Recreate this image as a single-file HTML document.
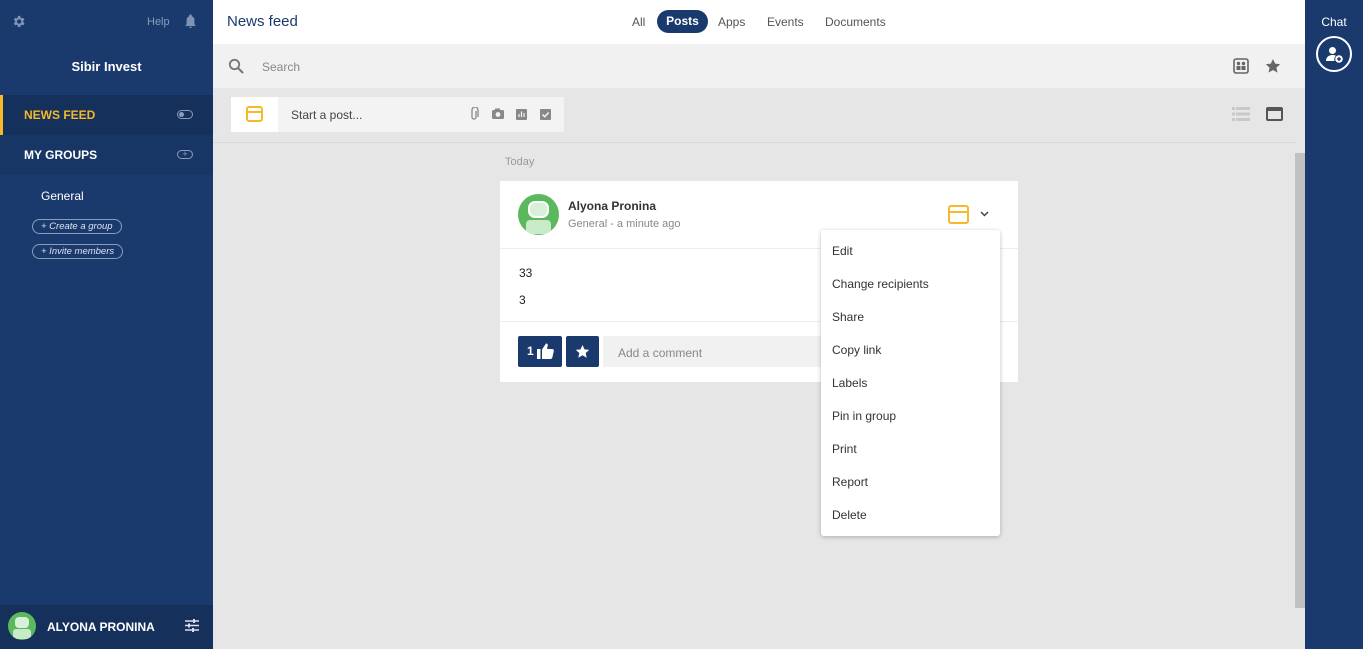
<!DOCTYPE html>
<html><head><meta charset="utf-8"><style>
*{box-sizing:border-box;margin:0;padding:0}
body{width:1363px;height:649px;overflow:hidden;font-family:"Liberation Sans",sans-serif;font-size:12px;position:relative;background:#e6e6e6}
.abs{position:absolute}
#sb{left:0;top:0;width:213px;height:649px;background:#1a3a6d;color:#fff}
#chat{left:1305px;top:0;width:58px;height:649px;background:#1a3a6d;color:#fff}
.menu div{height:33px;line-height:33px;padding-left:11px;color:#333;font-size:12px}
.pill{border:1px solid #8a9cba;border-radius:10px;font-style:italic;font-size:10px;color:#dbe2ee;padding:1px 8px;display:inline-block}
</style></head><body>
<div id="sb" class="abs">
  <svg class="abs" style="left:11px;top:14px" width="15" height="15" viewBox="0 0 24 24"><path fill="#7f93b4" d="M19.4 13a7.5 7.5 0 000-2l2.1-1.6-2-3.5-2.5 1a7 7 0 00-1.7-1L15 3h-4l-.4 2.9a7 7 0 00-1.7 1l-2.5-1-2 3.5L6.6 11a7.5 7.5 0 000 2l-2.1 1.6 2 3.5 2.5-1a7 7 0 001.7 1L11 21h4l.4-2.9a7 7 0 001.7-1l2.5 1 2-3.5zM13 15.5A3.5 3.5 0 1113 8.5a3.5 3.5 0 010 7z"/></svg>
  <div class="abs" style="left:147px;top:16px;color:#8a9cba;font-size:11px">Help</div>
  <svg class="abs" style="left:184px;top:14px" width="13" height="15" viewBox="0 0 20 22"><path fill="#7f93b4" d="M10 0a2 2 0 012 2v1a6 6 0 014 6v6l2 3H2l2-3V9a6 6 0 014-6V2a2 2 0 012-2zM8 19h4a2 2 0 01-4 0z"/></svg>
  <div class="abs" style="left:0;width:213px;top:59px;text-align:center;font-weight:bold;font-size:13px">Sibir Invest</div>
  <div class="abs" style="left:0;top:95px;width:213px;height:40px;background:#14305b;border-left:3px solid #f7b928"></div>
  <div class="abs" style="left:24px;top:108px;font-weight:bold;color:#f7b928;font-size:12px">NEWS FEED</div>
  <div class="abs" style="left:177px;top:110px;width:16px;height:9px;border:1px solid #8a9cba;border-radius:5px"><div style="width:5px;height:5px;background:#8a9cba;border-radius:50%;margin:1px"></div></div>
  <div class="abs" style="left:0;top:135px;width:213px;height:40px;background:#173665"></div>
  <div class="abs" style="left:24px;top:148px;font-weight:bold;font-size:12px">MY GROUPS</div>
  <div class="abs" style="left:177px;top:150px;width:16px;height:9px;border:1px solid #8a9cba;border-radius:5px;color:#8a9cba;font-size:9px;line-height:7px;text-align:center">+</div>
  <div class="abs" style="left:41px;top:189px;font-size:12px">General</div>
  <div class="abs pill" style="left:32px;top:219px;font-size:9.5px">+ Create a group</div>
  <div class="abs pill" style="left:32px;top:244px;font-size:9.5px">+ Invite members</div>
  <div class="abs" style="left:0;top:605px;width:213px;height:44px;background:#14305b"></div>
  <div class="abs" style="left:8px;top:612px;width:28px;height:28px;border-radius:50%;background:#5cb85c;overflow:hidden"><div style="margin:5px 7px 0;width:14px;height:11px;border-radius:4px;background:#d8f0d8"></div><div style="margin:1px 5px;width:18px;height:10px;border-radius:3px;background:#c9eac9"></div></div>
  <div class="abs" style="left:47px;top:620px;font-weight:bold;font-size:12px">ALYONA PRONINA</div>
  <svg class="abs" style="left:185px;top:619px" width="14" height="13" viewBox="0 0 14 13"><g stroke="#dde" stroke-width="1.6"><path d="M0 2h14M0 6.5h14M0 11h14"/></g><g stroke="#dde" stroke-width="2"><path d="M9 0v4M4 4.5v4M8 9v4"/></g></svg>
</div>
<div class="abs" style="left:213px;top:0;width:1092px;height:44px;background:#fff"></div>
<div class="abs" style="left:227px;top:13px;font-size:15px;color:#1a3a6d">News feed</div>
<div class="abs" style="left:632px;top:15px;color:#555;font-size:12px">All</div>
<div class="abs" style="left:657px;top:10px;width:51px;height:23px;border-radius:12px;background:#1a3a6d;color:#fff;font-weight:bold;text-align:center;line-height:23px">Posts</div>
<div class="abs" style="left:718px;top:15px;color:#555">Apps</div>
<div class="abs" style="left:767px;top:15px;color:#555">Events</div>
<div class="abs" style="left:825px;top:15px;color:#555">Documents</div>
<div class="abs" style="left:213px;top:44px;width:1092px;height:44px;background:#f1f1f1"></div>
<svg class="abs" style="left:228px;top:58px" width="16" height="16" viewBox="0 0 16 16"><circle cx="6.5" cy="6.5" r="4.7" fill="none" stroke="#777" stroke-width="1.8"/><path d="M10 10l5 5" stroke="#777" stroke-width="2"/></svg>
<div class="abs" style="left:262px;top:60px;color:#888">Search</div>
<svg class="abs" style="left:1233px;top:58px" width="16" height="16" viewBox="0 0 16 16"><rect x="1" y="1" width="14" height="14" rx="2" fill="none" stroke="#666" stroke-width="1.6"/><circle cx="5.5" cy="5.5" r="1.7" fill="#666"/><circle cx="10.5" cy="5.5" r="1.7" fill="#666"/><rect x="3.5" y="8" width="4" height="4" fill="#666"/><rect x="8.5" y="8" width="4" height="4" fill="#666"/></svg>
<svg class="abs" style="left:1265px;top:58px" width="16" height="16" viewBox="0 0 24 24"><path fill="#666" d="M12 1.5l3.2 7 7.6.8-5.7 5.1 1.6 7.5L12 18l-6.7 3.9 1.6-7.5-5.7-5.1 7.6-.8z"/></svg>
<div class="abs" style="left:231px;top:97px;width:333px;height:35px;background:#f3f3f3"></div>
<div class="abs" style="left:231px;top:97px;width:47px;height:35px;background:#fff"></div>
<div class="abs" style="left:246px;top:106px;width:17px;height:16px;border:2px solid #f7b928;border-radius:3px"><div style="height:2px;background:#f7b928;margin-top:3px"></div></div>
<div class="abs" style="left:291px;top:108px;color:#444">Start a post...</div>
<svg class="abs" style="left:469px;top:107px" width="84" height="14" viewBox="0 0 84 14">
<path d="M7 4v6a2 2 0 01-4 0V3a3 3 0 016 0v7" fill="none" stroke="#888" stroke-width="1.3"/>
<rect x="23" y="3" width="12" height="9" rx="1.5" fill="#888"/><rect x="26" y="1.5" width="5" height="2" fill="#888"/><circle cx="29" cy="7.5" r="2.4" fill="#f3f3f3"/>
<rect x="47" y="2" width="11" height="11" rx="1" fill="#888"/><path d="M50 10V7M52.5 10V4.5M55 10V6" stroke="#f3f3f3" stroke-width="1.2"/>
<rect x="71" y="2" width="11" height="11" rx="1" fill="#888"/><path d="M73.5 7.5l2.2 2.2 4-4.2" fill="none" stroke="#f3f3f3" stroke-width="1.5"/>
</svg>
<svg class="abs" style="left:1232px;top:107px" width="18" height="14" viewBox="0 0 18 14"><g fill="#c8c8c8"><rect x="0" y="0" width="3" height="3"/><rect x="4" y="0" width="14" height="3"/><rect x="0" y="5.5" width="3" height="3"/><rect x="4" y="5.5" width="14" height="3"/><rect x="0" y="11" width="3" height="3"/><rect x="4" y="11" width="14" height="3"/></g></svg>
<div class="abs" style="left:1266px;top:107px;width:17px;height:14px;border:2px solid #555;border-top-width:4px;border-radius:2px"></div>
<div class="abs" style="left:213px;top:142px;width:1082px;height:1px;background:#d8d8d8"></div>
<div class="abs" style="left:1295px;top:153px;width:10px;height:455px;background:#c1c1c1"></div>
<div class="abs" style="left:505px;top:156px;color:#999;font-size:11px">Today</div>
<div class="abs" style="left:500px;top:181px;width:518px;height:201px;background:#fff"></div>
<div class="abs" style="left:500px;top:248px;width:518px;height:1px;background:#eee"></div>
<div class="abs" style="left:500px;top:321px;width:518px;height:1px;background:#eee"></div>
<div class="abs" style="left:518px;top:194px;width:41px;height:41px;border-radius:50%;background:#5cb85c;overflow:hidden"><div style="margin:7px 10px 0;width:21px;height:17px;border-radius:7px;background:#d8f0d8;border:2px solid #fff"></div><div style="margin:2px 8px;width:25px;height:14px;background:#c9eac9;border-radius:4px"></div></div>
<div class="abs" style="left:568px;top:199px;font-weight:bold;color:#333;font-size:12px">Alyona Pronina</div>
<div class="abs" style="left:568px;top:218px;color:#888;font-size:11px">General - a minute ago</div>
<div class="abs" style="left:948px;top:205px;width:21px;height:19px;border:2px solid #f7b928;border-radius:3px"><div style="height:2px;background:#f7b928;margin-top:4px"></div></div>
<svg class="abs" style="left:980px;top:211px" width="9" height="6" viewBox="0 0 9 6"><path d="M1 1l3.5 3.5L8 1" fill="none" stroke="#444" stroke-width="1.5"/></svg>
<div class="abs" style="left:519px;top:266px;color:#222">33</div>
<div class="abs" style="left:519px;top:293px;color:#222">3</div>
<div class="abs" style="left:518px;top:336px;width:44px;height:31px;background:#1a3a6d;border-radius:2px;color:#fff;font-weight:bold;line-height:31px;padding-left:9px">1</div>
<svg class="abs" style="left:537px;top:343px" width="17" height="16" viewBox="0 0 17 16"><rect x="0" y="6" width="3.5" height="10" fill="#fff"/><path fill="#fff" d="M5 6.5L9 .5c1.5 0 2 1 1.7 2.3L10 6h5.2c1.2 0 1.8 1 1.6 2l-1.4 6.3c-.2 1-.9 1.7-1.9 1.7H5z"/></svg>
<div class="abs" style="left:566px;top:336px;width:33px;height:31px;background:#1a3a6d;border-radius:2px"></div>
<svg class="abs" style="left:575px;top:344px" width="15" height="15" viewBox="0 0 24 24"><path fill="#fff" d="M12 1.5l3.2 7 7.6.8-5.7 5.1 1.6 7.5L12 18l-6.7 3.9 1.6-7.5-5.7-5.1 7.6-.8z"/></svg>
<div class="abs" style="left:603px;top:336px;width:220px;height:31px;background:#f1f1f1"></div>
<div class="abs" style="left:618px;top:346px;color:#888">Add a comment</div>
<div class="abs menu" style="left:821px;top:230px;width:179px;height:306px;background:#fff;border-radius:3px;box-shadow:0 1px 5px rgba(0,0,0,.25);padding-top:5px">
<div>Edit</div><div>Change recipients</div><div>Share</div><div>Copy link</div><div>Labels</div><div>Pin in group</div><div>Print</div><div>Report</div><div>Delete</div>
</div>
<div id="chat" class="abs">
  <div style="text-align:center;margin-top:15px;font-size:12px">Chat</div>
  <div style="margin:7px auto 0;width:36px;height:36px;border:2px solid #fff;border-radius:50%;position:relative">
    <svg style="position:absolute;left:8px;top:8px" width="18" height="18" viewBox="0 0 18 18"><circle cx="6.5" cy="4.5" r="3.5" fill="#fff"/><path d="M0 15c0-4 3-6 6.5-6 1.5 0 2.5.3 3.5.8A5 5 0 008.5 15z" fill="#fff"/><circle cx="13" cy="13" r="3.8" fill="#fff"/><path d="M13 11v4M11 13h4" stroke="#1a3a6d" stroke-width="1.4"/></svg>
  </div>
</div>
</body></html>
